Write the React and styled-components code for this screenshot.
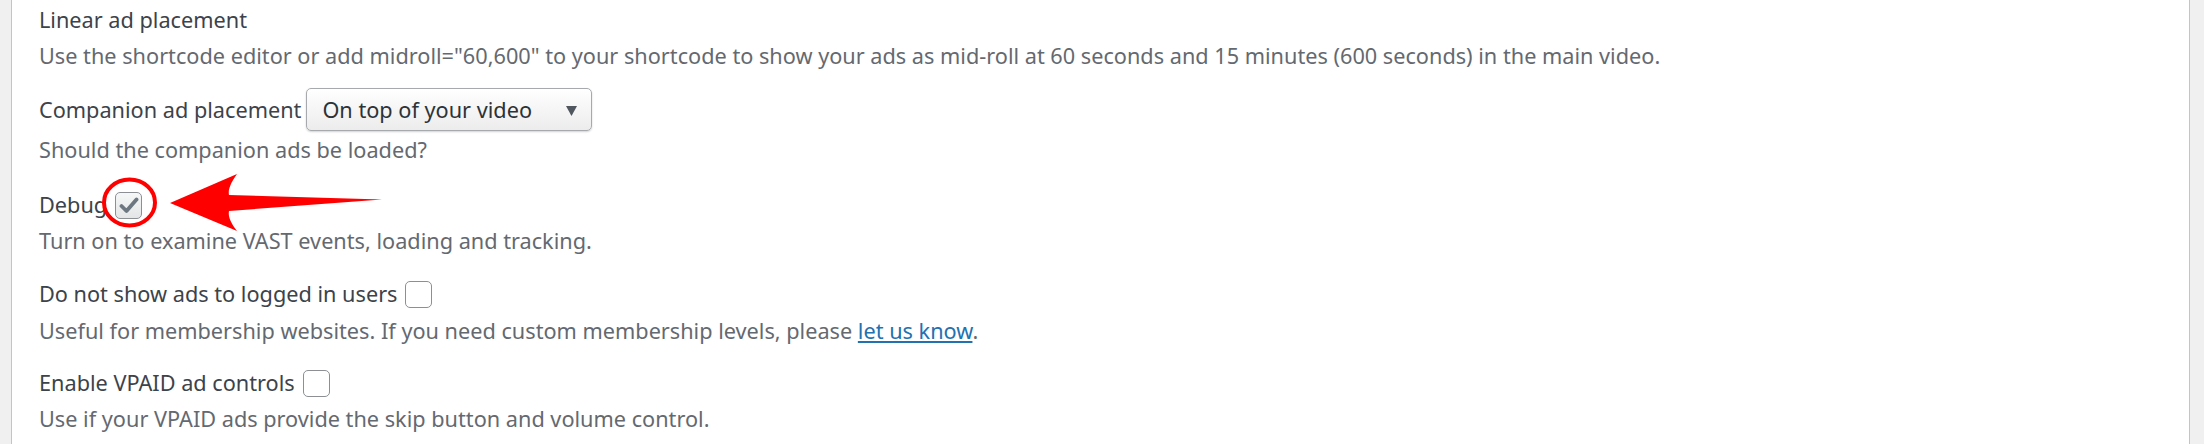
import React from "react";
import styled, { createGlobalStyle } from "styled-components";

const FONT = `"Noto Sans", "Open Sans", sans-serif`;

const GlobalStyle = createGlobalStyle`
  html, body { margin: 0; padding: 0; }
  body { background: #f0f0f1; font-family: ${FONT}; }
`;

const Page = styled.div`
  position: relative;
  min-height: 444px;
  padding: 0 14px 0 11px;
  box-sizing: border-box;
  display: flex;
`;

const Panel = styled.div`
  flex: 1;
  background: #fff;
  border-left: 1px solid #c3c4c7;
  border-right: 1px solid #c3c4c7;
  padding: 5px 27px 0;
  display: flex;
  flex-direction: column;
  min-height: 444px;
  box-sizing: border-box;
`;

const Field = styled.div`
  display: flex;
  flex-direction: column;
  margin-top: ${(p) => p.$top || 0}px;
`;

const Row = styled.div`
  display: flex;
  align-items: center;
  gap: ${(p) => p.$gap || 8}px;
  font-size: 21.7px;
  line-height: 30px;
  color: #3c434a;
  height: ${(p) => p.$h || 30}px;
  white-space: nowrap;
`;

const Desc = styled.p`
  margin: ${(p) => (p.$top ?? 6)}px 0 0;
  font-size: 21.7px;
  line-height: 30px;
  color: #646970;
  white-space: nowrap;
`;

const Link = styled.a`
  color: #2271b1;
  text-decoration: underline;
`;

const SelectWrap = styled.div`
  position: relative;
  width: 286px;
  height: 43px;
  flex: none;
`;

const Select = styled.select`
  appearance: none;
  width: 100%;
  height: 100%;
  border: 1px solid #a7aaad;
  border-radius: 5px;
  background: linear-gradient(#ffffff, #ececec);
  box-shadow: 0 1px 2px rgba(0, 0, 0, 0.18);
  font-family: ${FONT};
  font-size: 21.7px;
  color: #2c3338;
  padding: 0 0 0 15px;
  box-sizing: border-box;
`;

const Caret = styled.svg`
  position: absolute;
  right: 15px;
  top: 18px;
  pointer-events: none;
`;

const Box = styled.span`
  width: 27px;
  height: 27px;
  box-sizing: border-box;
  border: 1px solid #8c8f94;
  border-radius: 5px;
  background: ${(p) => (p.$checked ? "linear-gradient(#f6f7f7, #e4e5e6)" : "#fff")};
  display: inline-flex;
  align-items: center;
  justify-content: center;
  flex: none;
`;

const Annotation = styled.svg`
  position: absolute;
  left: 0;
  top: 0;
  pointer-events: none;
`;

const LONG =
  'Use the shortcode editor or add midroll="60,600" to your shortcode to show your ads as mid-roll at 60 seconds and 15 minutes (600 seconds) in the main video.';

function Check({ checked }) {
  return (
    <Box $checked={checked}>
      {checked && (
        <svg width="20" height="17" viewBox="0 0 20 17">
          <path d="M2.5 9 L7.5 14 L17.5 2.5" fill="none" stroke="#6c7781" strokeWidth="3.8" strokeLinecap="round" strokeLinejoin="round" />
        </svg>
      )}
    </Box>
  );
}

export default function App() {
  return (
    <>
      <GlobalStyle />
      <Page>
        <Panel>
          <Field>
            <Row>Linear ad placement</Row>
            <Desc>{LONG}</Desc>
          </Field>
          <Field $top={17}>
            <Row $h={43} $gap={5}>
              Companion ad placement
              <SelectWrap>
                <Select defaultValue="top">
                  <option value="top">On top of your video</option>
                </Select>
                <Caret width="11" height="10" viewBox="0 0 11 10">
                  <path d="M0 0 H11 L5.5 10 Z" fill="#50575e" />
                </Caret>
              </SelectWrap>
            </Row>
            <Desc $top={4}>Should the companion ads be loaded?</Desc>
          </Field>
          <Field $top={25}>
            <Row>
              Debug
              <Check checked />
            </Row>
            <Desc>Turn on to examine VAST events, loading and tracking.</Desc>
          </Field>
          <Field $top={23}>
            <Row>
              Do not show ads to logged in users
              <Check />
            </Row>
            <Desc $top={7}>
              Useful for membership websites. If you need custom membership levels, please{" "}
              <Link href="#">let us know</Link>.
            </Desc>
          </Field>
          <Field $top={22}>
            <Row>
              Enable VPAID ad controls
              <Check />
            </Row>
            <Desc>Use if your VPAID ads provide the skip button and volume control.</Desc>
          </Field>
        </Panel>
        <Annotation width="400" height="260" viewBox="0 0 400 260">
          <ellipse cx="129.5" cy="202.5" rx="25.5" ry="23" fill="none" stroke="#ff0000" strokeWidth="4" />
          <path
            d="M170 203 L237 174 C230 184 228 190 229 195 L382 199.5 L229 211 C228 216 230 222 237 231 Z"
            fill="#ff0000"
          />
        </Annotation>
      </Page>
    </>
  );
}
